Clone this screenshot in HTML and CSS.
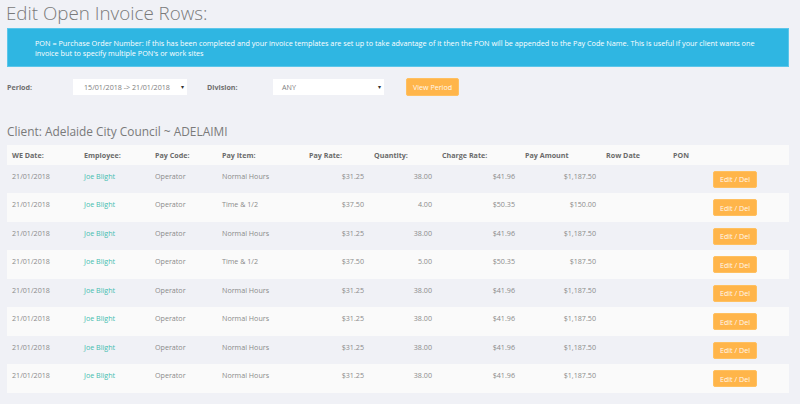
FILE: index.html
```html
<!DOCTYPE html>
<html>
<head>
<meta charset="utf-8">
<link rel="stylesheet" href="styles.css">
</head>
<body>
<div class="page">
  <h1 class="title">Edit Open Invoice Rows:</h1>
  <div class="alert">PON = Purchase Order Number: If this has been completed and your invoice templates are set up to take advantage of it then the PON will be appended to the Pay Code Name. This is useful if your client wants one<br>invoice but to specify multiple PON's or work sites</div>
  <div class="filters">
    <label class="flabel">Period:</label>
    <div class="select sel-period"><span>15/01/2018 -&gt; 21/01/2018</span><span class="caret">▾</span></div>
    <label class="flabel flabel-div">Division:</label>
    <div class="select sel-div"><span>ANY</span><span class="caret">▾</span></div>
    <button class="btn btn-view">View Period</button>
  </div>
  <h2 class="client">Client: Adelaide City Council ~ ADELAIMI</h2>
  <table class="rows">
    <colgroup>
      <col style="width:72px"><col style="width:71px"><col style="width:67px"><col style="width:87px"><col style="width:65px"><col style="width:68px"><col style="width:83px"><col style="width:81px"><col style="width:67px"><col style="width:40px"><col style="width:81px">
    </colgroup>
    <thead>
      <tr><th>WE Date:</th><th>Employee:</th><th>Pay Code:</th><th>Pay Item:</th><th>Pay Rate:</th><th>Quantity:</th><th>Charge Rate:</th><th>Pay Amount</th><th>Row Date</th><th>PON</th><th></th></tr>
    </thead>
    <tbody>
      <tr><td>21/01/2018</td><td class="emp">Joe Blight</td><td>Operator</td><td>Normal Hours</td><td class="num">$31.25</td><td class="num">38.00</td><td class="num">$41.96</td><td class="num">$1,187.50</td><td></td><td></td><td><button class="btn btn-edit">Edit / Del</button></td></tr>
      <tr><td>21/01/2018</td><td class="emp">Joe Blight</td><td>Operator</td><td>Time &amp; 1/2</td><td class="num">$37.50</td><td class="num">4.00</td><td class="num">$50.35</td><td class="num">$150.00</td><td></td><td></td><td><button class="btn btn-edit">Edit / Del</button></td></tr>
      <tr><td>21/01/2018</td><td class="emp">Joe Blight</td><td>Operator</td><td>Normal Hours</td><td class="num">$31.25</td><td class="num">38.00</td><td class="num">$41.96</td><td class="num">$1,187.50</td><td></td><td></td><td><button class="btn btn-edit">Edit / Del</button></td></tr>
      <tr><td>21/01/2018</td><td class="emp">Joe Blight</td><td>Operator</td><td>Time &amp; 1/2</td><td class="num">$37.50</td><td class="num">5.00</td><td class="num">$50.35</td><td class="num">$187.50</td><td></td><td></td><td><button class="btn btn-edit">Edit / Del</button></td></tr>
      <tr><td>21/01/2018</td><td class="emp">Joe Blight</td><td>Operator</td><td>Normal Hours</td><td class="num">$31.25</td><td class="num">38.00</td><td class="num">$41.96</td><td class="num">$1,187.50</td><td></td><td></td><td><button class="btn btn-edit">Edit / Del</button></td></tr>
      <tr><td>21/01/2018</td><td class="emp">Joe Blight</td><td>Operator</td><td>Normal Hours</td><td class="num">$31.25</td><td class="num">38.00</td><td class="num">$41.96</td><td class="num">$1,187.50</td><td></td><td></td><td><button class="btn btn-edit">Edit / Del</button></td></tr>
      <tr><td>21/01/2018</td><td class="emp">Joe Blight</td><td>Operator</td><td>Normal Hours</td><td class="num">$31.25</td><td class="num">38.00</td><td class="num">$41.96</td><td class="num">$1,187.50</td><td></td><td></td><td><button class="btn btn-edit">Edit / Del</button></td></tr>
      <tr><td>21/01/2018</td><td class="emp">Joe Blight</td><td>Operator</td><td>Normal Hours</td><td class="num">$31.25</td><td class="num">38.00</td><td class="num">$41.96</td><td class="num">$1,187.50</td><td></td><td></td><td><button class="btn btn-edit">Edit / Del</button></td></tr>
    </tbody>
  </table>
</div>
</body>
</html>
```
FILE: styles.css
```css
html, body {
  margin: 0;
  padding: 0;
  background: #f0f1f6;
  font-family: "Open Sans", "Noto Sans", sans-serif;
  color: #8a8a8a;
  font-size: 7.15px;
}
.page {
  padding: 0 11px 0 7px;
}
.title {
  margin: 0 0 1px -1px;
  font-size: 18.8px;
  font-weight: 300;
  color: #7a7a7a;
  line-height: 27px;
}
.alert {
  background: #2fb6e2;
  border: 1px solid #5cc6ea;
  color: #ffffff;
  padding: 9px 20px 8px 27px;
  line-height: 10px;
  font-size: 7.27px;
  white-space: nowrap;
}
.filters {
  display: flex;
  align-items: center;
  margin-top: 11px;
  height: 18px;
}
.flabel {
  width: 66px;
  font-weight: 700;
  color: #6e6e6e;
}
.flabel-div {
  margin-left: 20px;
}
.select {
  display: flex;
  align-items: center;
  justify-content: space-between;
  background: #ffffff;
  height: 16px;
  box-sizing: border-box;
  color: #7d7d7d;
}
.sel-period {
  width: 114px;
  padding: 0 3px 0 11px;
}
.sel-div {
  width: 111px;
  padding: 0 3px 0 9px;
}
.caret {
  font-size: 6px;
  color: #333;
}
.btn {
  font-family: "Open Sans", "Noto Sans", sans-serif;
  font-size: 7.15px;
  color: #fff8ee;
  background: #ffb54a;
  border: 1px solid #ffc060;
  border-radius: 2px;
  padding: 0;
  cursor: pointer;
}
.btn-view {
  margin-left: 22px;
  width: 53px;
  height: 18px;
}
.client {
  margin: 27px 0 4px 0;
  font-size: 11.9px;
  font-weight: 400;
  color: #7a7a7a;
  line-height: 17.5px;
}
.rows {
  width: 782px;
  table-layout: fixed;
  border-collapse: collapse;
}
.rows th {
  background: #fafafa;
  color: #6a6a6a;
  font-weight: 700;
  text-align: left;
  height: 20px;
  padding: 0 5px;
  line-height: 10px;
}
.rows td {
  height: 28.5px;
  box-sizing: border-box;
  padding: 6px 5px 0 5px;
  vertical-align: top;
  line-height: 10px;
  white-space: nowrap;
}
.rows tbody tr:nth-child(odd) td {
  background: #f0f1f6;
}
.rows tbody tr:nth-child(even) td {
  background: #fafafa;
}
.rows td.num {
  text-align: right;
}
.rows td.emp {
  color: #45bdb0;
}
.btn-edit {
  width: 44px;
  height: 17px;
  display: block;
}
```
